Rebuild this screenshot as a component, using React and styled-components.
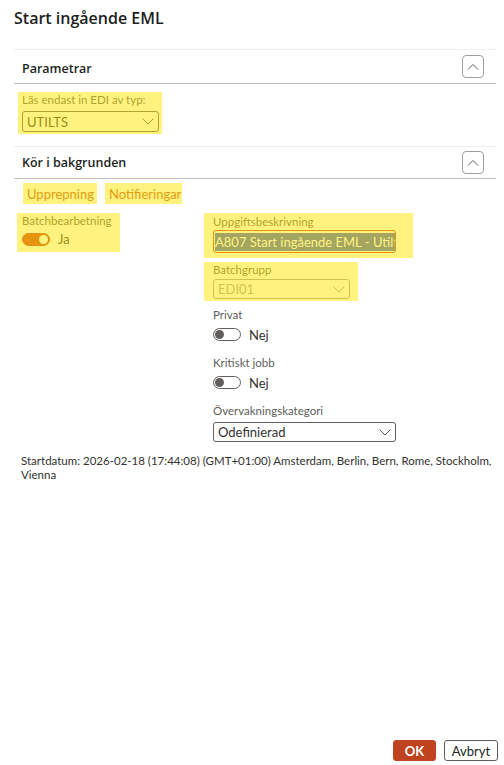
import React from 'react';
import styled, { createGlobalStyle } from 'styled-components';

const Global = createGlobalStyle`
  html, body { margin: 0; padding: 0; background: #fff; }
  body { font-family: Lato, "Noto Sans", sans-serif; color: #323130; }
`;

const Page = styled.div`
  box-sizing: border-box;
  height: 765px;
  padding: 0 8px 4px 14px;
  display: flex;
  flex-direction: column;
`;

const Title = styled.h1`
  box-sizing: border-box;
  margin: 0;
  height: 49px;
  padding-top: 6px;
  font-family: "Open Sans", Lato, sans-serif;
  font-size: 16px;
  font-weight: 600;
  line-height: 24px;
  color: #201f1e;
`;

const SectionHeader = styled.div`
  box-sizing: border-box;
  height: ${p => p.$h}px;
  display: flex;
  align-items: center;
  justify-content: space-between;
  padding: 0 12px 0 8px;
  border-top: 1px solid #f0efee;
  border-bottom: 1px solid #bdbdbd;
  margin-top: ${p => p.$mt || 0}px;
`;

const SectionTitle = styled.span`
  font-family: "Open Sans", Lato, sans-serif;
  font-size: 12.5px;
  font-weight: 600;
  color: #201f1e;
  padding-top: ${p => p.$pt || 0}px;
`;

const CollapseBtn = styled.button`
  box-sizing: border-box;
  width: 22px;
  height: 23px;
  padding: 0;
  border: 1px solid #a19f9d;
  border-radius: 4px;
  background: #fff;
  display: flex;
  align-items: center;
  justify-content: center;
`;

const Highlight = styled.div`
  position: relative;
  box-sizing: border-box;
  width: ${p => (p.$w ? `${p.$w}px` : 'auto')};
  padding: ${p => p.$pad || '0'};
  margin: ${p => p.$m || '0'};
  &::after {
    content: '';
    position: absolute;
    inset: 0;
    background: rgba(255, 230, 0, 0.5);
    pointer-events: none;
  }
`;

const Label = styled.div`
  font-size: 11.5px;
  line-height: 16px;
  height: 16px;
  color: #605e5c;
  white-space: nowrap;
`;

const Select = styled.div`
  box-sizing: border-box;
  width: ${p => p.$w}px;
  height: ${p => p.$h}px;
  margin-top: ${p => p.$mt || 0}px;
  border: 1px solid ${p => (p.$disabled ? '#a19f9d' : '#605e5c')};
  border-radius: 3px;
  display: flex;
  align-items: center;
  justify-content: space-between;
  padding: 0 4px 0 4px;
  font-size: 13px;
  color: ${p => (p.$disabled ? '#a19f9d' : '#323130')};
  background: #fff;
`;

const TextInput = styled.div`
  box-sizing: border-box;
  width: 183px;
  height: 23px;
  border: 1px solid #c8431e;
  border-radius: 3px;
  display: flex;
  align-items: center;
  padding: 0 1px 0 1px;
  overflow: hidden;
  white-space: nowrap;
  font-size: 13px;
  background: #fff;
`;

const Selected = styled.span`
  background: rgb(70, 100, 195);
  color: #fff;
  line-height: 18px;
`;

const Tabs = styled.div`
  display: flex;
  gap: 8px;
  margin: 4px 0 0 9px;
  height: 21px;
`;

const Tab = styled(Highlight)`
  display: flex;
  align-items: center;
  padding: 0 3px 0 4px;
  font-size: 13px;
  color: #c8501e;
`;

const Columns = styled.div`
  display: grid;
  grid-template-columns: 187px 1fr;
  margin: 9px 0 0 3px;
`;

const RightCol = styled.div`
  display: flex;
  flex-direction: column;
`;

const Field = styled.div`
  margin-top: ${p => p.$mt || 0}px;
  margin-left: 9px;
`;

const ToggleRow = styled.div`
  display: flex;
  align-items: center;
  gap: 8px;
  height: ${p => p.$h || 23}px;
  font-size: 13px;
  color: #323130;
`;

const Toggle = styled.div`
  box-sizing: border-box;
  width: 28px;
  height: 13px;
  border-radius: 7px;
  border: 1px solid ${p => (p.$on ? '#c8431e' : '#605e5c')};
  background: ${p => (p.$on ? '#c8431e' : '#fff')};
  display: flex;
  align-items: center;
  justify-content: ${p => (p.$on ? 'flex-end' : 'flex-start')};
  padding: 0 1px;
  &::before {
    content: '';
    width: 9px;
    height: 9px;
    border-radius: 50%;
    background: ${p => (p.$on ? '#fff' : '#605e5c')};
  }
`;

const Info = styled.div`
  margin: 12px 0 0 7px;
  font-size: 11.5px;
  line-height: 14px;
  color: #323130;
`;

const Spacer = styled.div`
  flex: 1;
`;

const Buttons = styled.div`
  display: flex;
  justify-content: flex-end;
  gap: 8px;
  margin-right: -2px;
`;

const Button = styled.button`
  box-sizing: border-box;
  height: 21px;
  min-width: ${p => p.$w}px;
  padding: 0 6px;
  border-radius: 3px;
  font-family: inherit;
  font-size: 13px;
  font-weight: ${p => (p.$primary ? 700 : 400)};
  border: 1px solid ${p => (p.$primary ? '#c0431f' : '#605e5c')};
  background: ${p => (p.$primary ? '#c0431f' : '#fff')};
  color: ${p => (p.$primary ? '#fff' : '#201f1e')};
`;

const ChevronUp = () => (
  <svg width="12" height="8" viewBox="0 0 12 8">
    <polyline points="1,6.5 6,1.5 11,6.5" fill="none" stroke="#605e5c" strokeWidth="1" />
  </svg>
);

const ChevronDown = ({ color = '#605e5c' }) => (
  <svg width="12" height="7" viewBox="0 0 12 7">
    <polyline points="0.5,0.5 6,6 11.5,0.5" fill="none" stroke={color} strokeWidth="1" />
  </svg>
);

export default function App() {
  return (
    <>
      <Global />
      <Page>
        <Title>Start ingående EML</Title>

        <SectionHeader $h={35}>
          <SectionTitle $pt={3}>Parametrar</SectionTitle>
          <CollapseBtn><ChevronUp /></CollapseBtn>
        </SectionHeader>

        <Highlight $w={144} $pad="0 3px 2px 4px" $m="8px 0 0 4px">
          <Label>Läs endast in EDI av typ:</Label>
          <Select $w={137} $h={21} $mt={3}>
            <span>UTILTS</span>
            <ChevronDown />
          </Select>
        </Highlight>

        <SectionHeader $h={33} $mt={12}>
          <SectionTitle>Kör i bakgrunden</SectionTitle>
          <CollapseBtn><ChevronUp /></CollapseBtn>
        </SectionHeader>

        <Tabs>
          <Tab $w={74}>Upprepning</Tab>
          <Tab $w={77}>Notifieringar</Tab>
        </Tabs>

        <Columns>
          <div>
            <Highlight $w={103} $pad="0 0 3px 5px">
              <Label>Batchbearbetning</Label>
              <ToggleRow $h={20}>
                <Toggle $on />
                <span>Ja</span>
              </ToggleRow>
            </Highlight>
          </div>
          <RightCol>
            <Highlight $w={209} $pad="1px 17px 5px 9px">
              <Label>Uppgiftsbeskrivning</Label>
              <TextInput>
                <Selected>A807 Start ingående EML - Utilts</Selected>
              </TextInput>
            </Highlight>
            <Highlight $w={154} $pad="0 8px 2px 9px" $m="4px 0 0 0">
              <Label>Batchgrupp</Label>
              <Select $w={137} $h={20} $mt={1} $disabled>
                <span>EDI01</span>
                <ChevronDown color="#a19f9d" />
              </Select>
            </Highlight>
            <Field $mt={6}>
              <Label>Privat</Label>
              <ToggleRow>
                <Toggle />
                <span>Nej</span>
              </ToggleRow>
            </Field>
            <Field $mt={9}>
              <Label>Kritiskt jobb</Label>
              <ToggleRow>
                <Toggle />
                <span>Nej</span>
              </ToggleRow>
            </Field>
            <Field $mt={9}>
              <Label>Övervakningskategori</Label>
              <Select $w={183} $h={20} $mt={3}>
                <span>Odefinierad</span>
                <ChevronDown />
              </Select>
            </Field>
          </RightCol>
        </Columns>

        <Info>
          Startdatum: 2026-02-18 (17:44:08) (GMT+01:00) Amsterdam, Berlin, Bern, Rome, Stockholm,
          <br />
          Vienna
        </Info>

        <Spacer />
        <Buttons>
          <Button $primary $w={43}>OK</Button>
          <Button $w={54}>Avbryt</Button>
        </Buttons>
      </Page>
    </>
  );
}
